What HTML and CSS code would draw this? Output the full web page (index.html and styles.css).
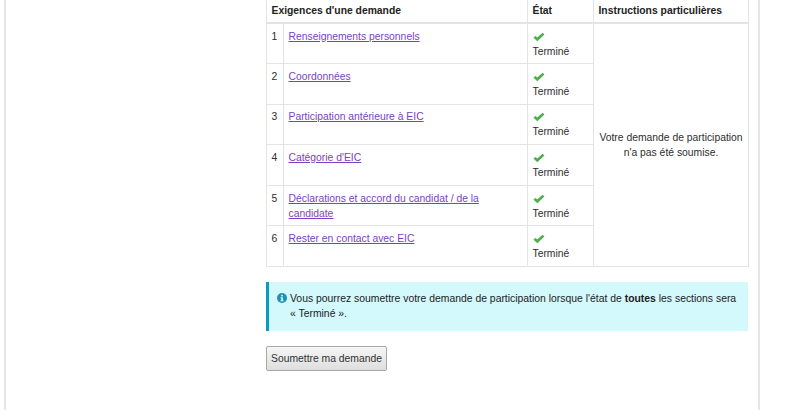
FILE: index.html
```html
<!DOCTYPE html>
<html lang="fr">
<head>
<meta charset="utf-8">
<title>Exigences d'une demande</title>
<link rel="stylesheet" href="styles.css">
</head>
<body>
<main class="page">
  <div class="content">
    <table class="reqs">
      <colgroup>
        <col class="c-num"><col class="c-name"><col class="c-state"><col class="c-inst">
      </colgroup>
      <thead>
        <tr><th colspan="2">Exigences d'une demande</th><th>État</th><th>Instructions particulières</th></tr>
      </thead>
      <tbody>
        <tr>
          <td>1</td><td><a href="#">Renseignements personnels</a></td>
          <td class="state"><svg class="check" viewBox="0 0 12 10"><path d="M0.4 5.6 2.4 3.9 4.3 5.6 9.6 0.8 11.4 2.5 4.3 9.2Z"/></svg><br>Terminé</td>
          <td class="inst" rowspan="6">Votre demande de participation n'a pas été soumise.</td>
        </tr>
        <tr>
          <td>2</td><td><a href="#">Coordonnées</a></td>
          <td class="state"><svg class="check" viewBox="0 0 12 10"><path d="M0.4 5.6 2.4 3.9 4.3 5.6 9.6 0.8 11.4 2.5 4.3 9.2Z"/></svg><br>Terminé</td>
        </tr>
        <tr>
          <td>3</td><td><a href="#">Participation antérieure à EIC</a></td>
          <td class="state"><svg class="check" viewBox="0 0 12 10"><path d="M0.4 5.6 2.4 3.9 4.3 5.6 9.6 0.8 11.4 2.5 4.3 9.2Z"/></svg><br>Terminé</td>
        </tr>
        <tr>
          <td>4</td><td><a href="#">Catégorie d'EIC</a></td>
          <td class="state"><svg class="check" viewBox="0 0 12 10"><path d="M0.4 5.6 2.4 3.9 4.3 5.6 9.6 0.8 11.4 2.5 4.3 9.2Z"/></svg><br>Terminé</td>
        </tr>
        <tr>
          <td>5</td><td><a href="#">Déclarations et accord du candidat / de la candidate</a></td>
          <td class="state"><svg class="check" viewBox="0 0 12 10"><path d="M0.4 5.6 2.4 3.9 4.3 5.6 9.6 0.8 11.4 2.5 4.3 9.2Z"/></svg><br>Terminé</td>
        </tr>
        <tr>
          <td>6</td><td><a href="#">Rester en contact avec EIC</a></td>
          <td class="state"><svg class="check" viewBox="0 0 12 10"><path d="M0.4 5.6 2.4 3.9 4.3 5.6 9.6 0.8 11.4 2.5 4.3 9.2Z"/></svg><br>Terminé</td>
        </tr>
      </tbody>
    </table>
    <div class="notice">
      <svg class="info" viewBox="0 0 10 10"><circle cx="5" cy="5" r="5"/><rect class="info-mark" x="4.1" y="1.8" width="1.8" height="1.6"/><path class="info-mark" d="M3.5 4.2H5.9V7.2H6.6V8.2H3.5V7.2H4.2V5.2H3.5Z"/></svg>
      <p class="notice-text">Vous pourrez soumettre votre demande de participation lorsque l'état de <strong>toutes</strong> les sections sera « Terminé ».</p>
    </div>
    <button class="submit" type="button">Soumettre ma demande</button>
  </div>
</main>
</body>
</html>
```

FILE: styles.css
```css
html, body {
  margin: 0;
  height: 410px;
  overflow: hidden;
  background: #fff;
}
body {
  font-family: "Liberation Sans", Arial, sans-serif;
  font-size: 10.35px;
  line-height: 15px;
  color: #2e2e2e;
}
.page {
  box-sizing: border-box;
  width: 756px;
  height: 410px;
  margin-left: 4px;
  border-left: 2px solid #e6e6e6;
  border-right: 2px solid #e6e6e6;
  padding-left: 260px;
}
.content {
  width: 482px;
}
.reqs {
  width: 482px;
  table-layout: fixed;
  border-collapse: collapse;
  border: 1px solid #e4e4e4;
  border-top: 0;
}
.c-num { width: 17px; }
.c-name { width: 244px; }
.c-state { width: 66px; }
.c-inst { width: 155px; }
.reqs th {
  height: 23px;
  padding: 0 4.5px 1px;
  box-sizing: border-box;
  text-align: left;
  font-weight: 700;
  color: #222;
  border: 1px solid #e4e4e4;
  border-top: 0;
  border-bottom-width: 2px;
}
.reqs td {
  height: 40.6px;
  padding: 4.7px 4.5px 0;
  box-sizing: border-box;
  vertical-align: top;
  border: 1px solid #e4e4e4;
}
.reqs a {
  color: #7a42c2;
}
.check {
  width: 12px;
  height: 10px;
  fill: #4cae4c;
  vertical-align: -2px;
}
.reqs .inst {
  vertical-align: middle;
  text-align: center;
  padding: 0 5px;
}
.notice {
  box-sizing: border-box;
  display: flex;
  gap: 3px;
  margin-top: 14.5px;
  padding: 9px 8px;
  height: 49px;
  background: #d3f9fd;
  border-left: 3px solid #0a9ac2;
  color: #222;
  font-size: 10.4px;
}
.notice-text {
  margin: 0;
  flex: 1;
  min-width: 0;
}
.notice strong {
  font-weight: 700;
}
.info {
  flex: none;
  width: 10px;
  height: 10px;
  margin-top: 2px;
  fill: #1f8fb5;
}
.info .info-mark {
  fill: #d3f9fd;
}
.submit {
  display: block;
  box-sizing: border-box;
  margin-top: 15px;
  width: 121px;
  height: 25px;
  padding: 0;
  font: inherit;
  white-space: nowrap;
  color: #333;
  background: linear-gradient(#f6f6f6, #dedede);
  border: 1px solid #a8a8a8;
  border-radius: 2px;
}
```
